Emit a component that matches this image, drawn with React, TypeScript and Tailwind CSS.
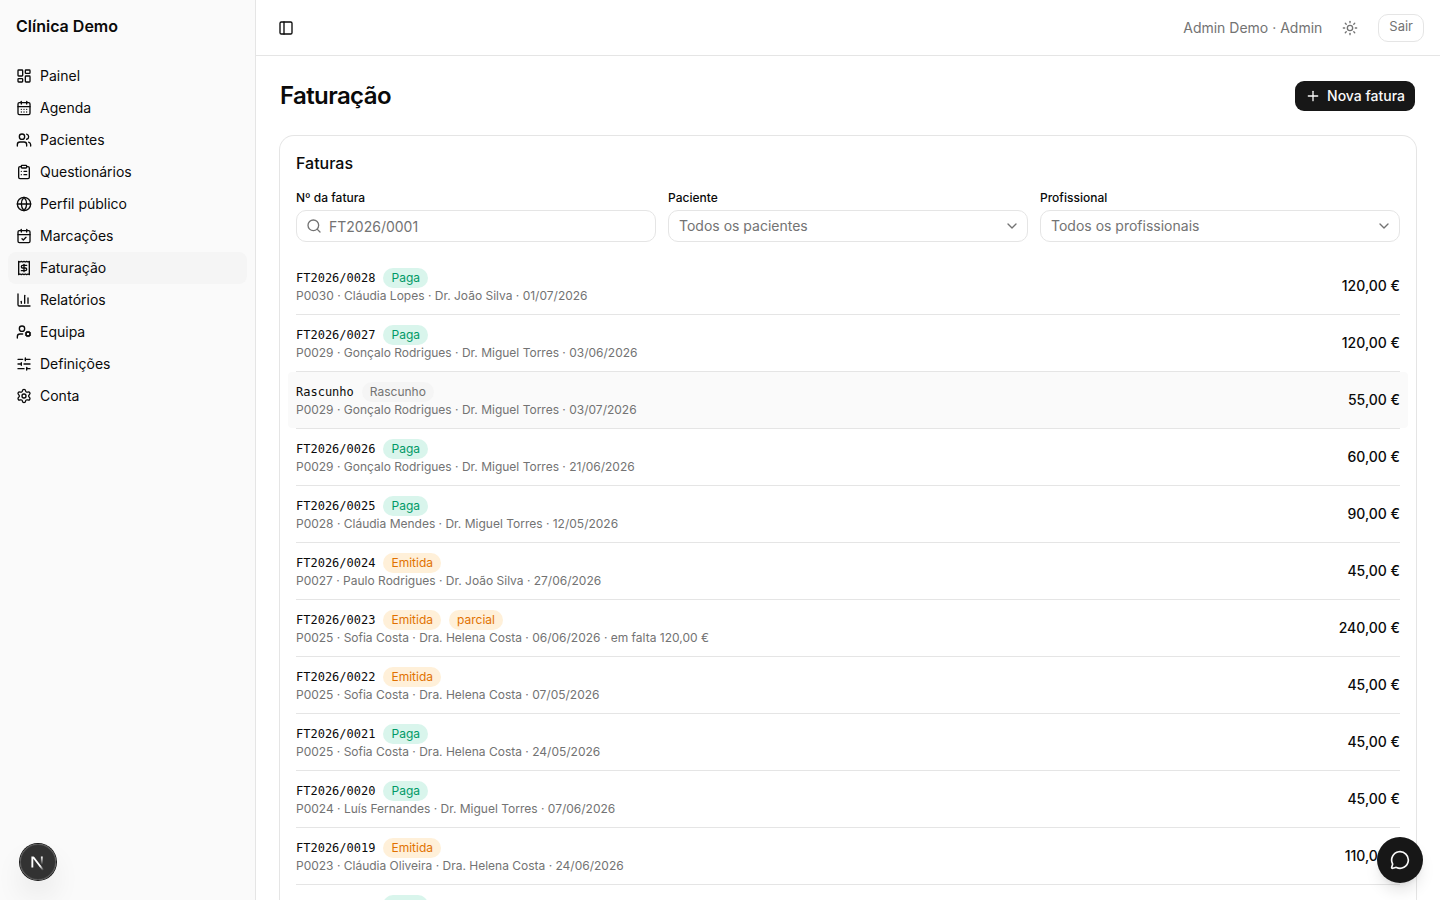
import type { ReactNode } from "react";
import {
  CalendarCheck,
  CalendarDays,
  ChartColumn,
  ChevronDown,
  ClipboardList,
  Globe,
  LayoutDashboard,
  MessageCircle,
  PanelLeft,
  Plus,
  Receipt,
  Search,
  Settings,
  SlidersHorizontal,
  Sun,
  UserCog,
  Users,
  type LucideIcon,
} from "lucide-react";
import clsx from "clsx";

type Status = "Paga" | "Emitida" | "Rascunho" | "parcial";

interface Invoice {
  number: string;
  badges: Status[];
  details: string[];
  total: string;
  highlighted?: boolean;
}

const navItems: { label: string; icon: LucideIcon; active?: boolean }[] = [
  { label: "Painel", icon: LayoutDashboard },
  { label: "Agenda", icon: CalendarDays },
  { label: "Pacientes", icon: Users },
  { label: "Questionários", icon: ClipboardList },
  { label: "Perfil público", icon: Globe },
  { label: "Marcações", icon: CalendarCheck },
  { label: "Faturação", icon: Receipt, active: true },
  { label: "Relatórios", icon: ChartColumn },
  { label: "Equipa", icon: UserCog },
  { label: "Definições", icon: SlidersHorizontal },
  { label: "Conta", icon: Settings },
];

const invoices: Invoice[] = [
  { number: "FT2026/0028", badges: ["Paga"], details: ["P0030", "Cláudia Lopes", "Dr. João Silva", "01/07/2026"], total: "120,00 €" },
  { number: "FT2026/0027", badges: ["Paga"], details: ["P0029", "Gonçalo Rodrigues", "Dr. Miguel Torres", "03/06/2026"], total: "120,00 €" },
  { number: "Rascunho", badges: ["Rascunho"], details: ["P0029", "Gonçalo Rodrigues", "Dr. Miguel Torres", "03/07/2026"], total: "55,00 €", highlighted: true },
  { number: "FT2026/0026", badges: ["Paga"], details: ["P0029", "Gonçalo Rodrigues", "Dr. Miguel Torres", "21/06/2026"], total: "60,00 €" },
  { number: "FT2026/0025", badges: ["Paga"], details: ["P0028", "Cláudia Mendes", "Dr. Miguel Torres", "12/05/2026"], total: "90,00 €" },
  { number: "FT2026/0024", badges: ["Emitida"], details: ["P0027", "Paulo Rodrigues", "Dr. João Silva", "27/06/2026"], total: "45,00 €" },
  { number: "FT2026/0023", badges: ["Emitida", "parcial"], details: ["P0025", "Sofia Costa", "Dra. Helena Costa", "06/06/2026", "em falta 120,00 €"], total: "240,00 €" },
  { number: "FT2026/0022", badges: ["Emitida"], details: ["P0025", "Sofia Costa", "Dra. Helena Costa", "07/05/2026"], total: "45,00 €" },
  { number: "FT2026/0021", badges: ["Paga"], details: ["P0025", "Sofia Costa", "Dra. Helena Costa", "24/05/2026"], total: "45,00 €" },
  { number: "FT2026/0020", badges: ["Paga"], details: ["P0024", "Luís Fernandes", "Dr. Miguel Torres", "07/06/2026"], total: "45,00 €" },
  { number: "FT2026/0019", badges: ["Emitida"], details: ["P0023", "Cláudia Oliveira", "Dra. Helena Costa", "24/06/2026"], total: "110,00 €" },
  { number: "FT2026/0018", badges: ["Paga"], details: ["P0022", "Luís Fernandes", "Dr. João Silva", "18/06/2026"], total: "60,00 €" },
];

const badgeStyles: Record<Status, string> = {
  Paga: "bg-emerald-500/15 text-emerald-600",
  Emitida: "bg-amber-500/15 text-amber-600",
  parcial: "bg-amber-500/15 text-amber-600",
  Rascunho: "bg-neutral-100 text-neutral-500",
};

function Sidebar() {
  return (
    <aside className="flex w-64 shrink-0 flex-col border-r border-neutral-200 bg-neutral-50">
      <div className="p-2">
        <p className="px-2 py-1.5 text-base font-semibold">Clínica Demo</p>
      </div>
      <nav className="p-2" aria-label="Principal">
        <ul>
          {navItems.map(({ label, icon: Icon, active }) => (
            <li key={label}>
              <a
                href="#"
                aria-current={active ? "page" : undefined}
                className={clsx(
                  "flex h-8 items-center gap-2 rounded-lg px-2 text-sm hover:bg-neutral-100",
                  active && "bg-neutral-100",
                )}
              >
                <Icon className="size-4" />
                {label}
              </a>
            </li>
          ))}
        </ul>
      </nav>
    </aside>
  );
}

function TopBar() {
  return (
    <header className="flex h-14 shrink-0 items-center justify-between border-b border-neutral-200 px-4">
      <button type="button" aria-label="Alternar menu" className="flex size-7 items-center justify-center">
        <PanelLeft className="size-4" />
      </button>
      <div className="flex items-center gap-3 text-neutral-500">
        <span className="text-sm">Admin Demo · Admin</span>
        <button type="button" aria-label="Mudar tema" className="flex size-8 items-center justify-center">
          <Sun className="size-4" />
        </button>
        <button
          type="button"
          className="flex h-7 items-start rounded-[10px] border border-neutral-200 px-2.5 pt-px text-[13px] leading-5"
        >
          Sair
        </button>
      </div>
    </header>
  );
}

function Field({ id, label, children }: { id: string; label: string; children: ReactNode }) {
  return (
    <div className="flex flex-col gap-1">
      <label htmlFor={id} className="text-xs font-medium">
        {label}
      </label>
      <div className="relative flex">{children}</div>
    </div>
  );
}

function SelectField({ id, label, placeholder }: { id: string; label: string; placeholder: string }) {
  return (
    <Field id={id} label={label}>
      <select
        id={id}
        className="h-8 w-full appearance-none rounded-[10px] border border-neutral-200 bg-white px-2.5 text-sm text-neutral-500"
      >
        <option>{placeholder}</option>
      </select>
      <ChevronDown className="pointer-events-none absolute top-2 right-2 size-4 text-neutral-500" />
    </Field>
  );
}

function InvoiceRow({ invoice }: { invoice: Invoice }) {
  return (
    <li className="border-b border-neutral-200 last:border-b-0">
      <a
        href="#"
        className={clsx(
          "-mx-2 flex items-center justify-between rounded-sm px-2 py-2.5 hover:bg-neutral-50",
          invoice.highlighted && "bg-neutral-50",
        )}
      >
        <div>
          <div className="flex items-center gap-2">
            <span className="font-['DejaVu_Sans_Mono',monospace] text-xs">{invoice.number}</span>
            {invoice.badges.map((badge) => (
              <span
                key={badge}
                className={clsx("flex h-5 items-center rounded-full px-2 text-xs", badgeStyles[badge])}
              >
                {badge}
              </span>
            ))}
          </div>
          <p className="text-xs text-neutral-500">{invoice.details.join(" · ")}</p>
        </div>
        <span className="text-sm font-medium">{invoice.total}</span>
      </a>
    </li>
  );
}

function NextMark() {
  return (
    <svg width="40" height="40" viewBox="0 0 40 40" fill="none" className="shrink-0" aria-hidden="true">
      <defs>
        <linearGradient id="markDiagonal" x1="9.95555" y1="11.1226" x2="15.4778" y2="17.9671" gradientUnits="userSpaceOnUse">
          <stop stopColor="white" />
          <stop offset="0.604072" stopColor="white" stopOpacity="0" />
          <stop offset="1" stopColor="white" stopOpacity="0" />
        </linearGradient>
        <linearGradient id="markStem" x1="11.8222" y1="1.40039" x2="11.791" y2="9.62542" gradientUnits="userSpaceOnUse">
          <stop stopColor="white" />
          <stop offset="1" stopColor="white" stopOpacity="0" />
        </linearGradient>
        <mask id="markMask">
          <rect width="100%" height="100%" fill="white" />
          <rect width="5" height="1.5" fill="black" />
        </mask>
      </defs>
      <g transform="translate(12 13)">
        <path d="M13.3 15.2 L2.34 1 V12.6" stroke="url(#markDiagonal)" strokeWidth="1.86" mask="url(#markMask)" />
        <path d="M11.825 1.5 V13.1" stroke="url(#markStem)" strokeWidth="1.86" />
      </g>
    </svg>
  );
}

export default function App() {
  return (
    <div className="flex h-screen overflow-hidden bg-white font-['Inter',sans-serif] text-neutral-950">
      <Sidebar />
      <div className="flex min-w-0 flex-1 flex-col">
        <TopBar />
        <main className="flex min-h-0 flex-1 flex-col gap-6 overflow-y-auto p-6 [scrollbar-width:none]">
          <div className="flex items-center justify-between">
            <h1 className="text-2xl font-semibold tracking-tight">Faturação</h1>
            <button
              type="button"
              className="flex h-8 items-center gap-1.5 rounded-[10px] border border-transparent bg-neutral-900 bg-clip-padding px-2.5 text-sm font-medium text-neutral-50"
            >
              <Plus className="size-4" />
              Nova fatura
            </button>
          </div>
          <section className="flex shrink-0 flex-col gap-4 rounded-[14px] p-4 ring-1 ring-neutral-200">
            <h2 className="text-base leading-[22px] font-medium">Faturas</h2>
            <div className="grid grid-cols-3 gap-3">
              <Field id="invoice-number" label="Nº da fatura">
                <Search className="pointer-events-none absolute top-2 left-2.5 size-4 text-neutral-500" />
                <input
                  id="invoice-number"
                  type="text"
                  placeholder="FT2026/0001"
                  className="h-8 w-full rounded-[10px] border border-neutral-200 pr-2.5 pl-8 text-sm placeholder:text-neutral-500"
                />
              </Field>
              <SelectField id="patient" label="Paciente" placeholder="Todos os pacientes" />
              <SelectField id="professional" label="Profissional" placeholder="Todos os profissionais" />
            </div>
            <ul>
              {invoices.map((invoice) => (
                <InvoiceRow key={invoice.number} invoice={invoice} />
              ))}
            </ul>
          </section>
        </main>
      </div>

      <button
        type="button"
        aria-label="Ferramentas de desenvolvimento"
        className="fixed bottom-5 left-5 flex size-9 items-center justify-center rounded-full bg-black/80 shadow-[0_0_0_1px_#171717,inset_0_0_0_1px_rgba(255,255,255,0.14),0_16px_32px_-8px_rgba(0,0,0,0.24)]"
      >
        <NextMark />
      </button>
      <button
        type="button"
        aria-label="Abrir conversa"
        className="fixed right-4 bottom-4 flex size-12 items-center justify-center rounded-full border border-transparent bg-neutral-900 bg-clip-padding text-neutral-50 shadow-lg"
      >
        <MessageCircle className="size-5" />
      </button>
    </div>
  );
}
